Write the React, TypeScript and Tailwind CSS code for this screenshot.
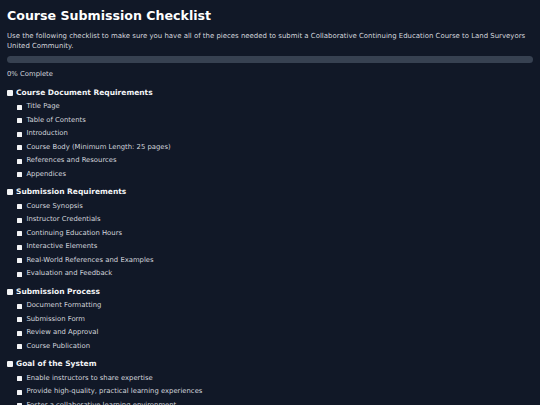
const sections: { title: string; items: string[] }[] = [
  {
    title: 'Course Document Requirements',
    items: [
      'Title Page',
      'Table of Contents',
      'Introduction',
      'Course Body (Minimum Length: 25 pages)',
      'References and Resources',
      'Appendices',
    ],
  },
  {
    title: 'Submission Requirements',
    items: [
      'Course Synopsis',
      'Instructor Credentials',
      'Continuing Education Hours',
      'Interactive Elements',
      'Real-World References and Examples',
      'Evaluation and Feedback',
    ],
  },
  {
    title: 'Submission Process',
    items: ['Document Formatting', 'Submission Form', 'Review and Approval', 'Course Publication'],
  },
  {
    title: 'Goal of the System',
    items: [
      'Enable instructors to share expertise',
      'Provide high-quality, practical learning experiences',
      'Foster a collaborative learning environment',
    ],
  },
];

export default function App() {
  return (
    <div
      className="min-h-screen bg-[#111827] px-[7px] pt-[7.5px] pb-4 text-gray-300"
      style={{ fontFamily: '"DejaVu Sans", Verdana, sans-serif' }}
    >
      <h1 className="text-[12.6px] leading-[15px] font-bold text-white">Course Submission Checklist</h1>
      <p className="mt-[8px] text-[6.95px] leading-[10px] text-gray-300">
        Use the following checklist to make sure you have all of the pieces needed to submit a Collaborative
        Continuing Education Course to Land Surveyors United Community.
      </p>

      {/* progress */}
      <div className="mt-[5.6px] h-[6.5px] w-full rounded-full bg-[#374151]">
        <div className="h-full rounded-full bg-blue-500" style={{ width: '0%' }} />
      </div>
      <p className="mt-[6.7px] text-[6.85px] leading-[10px]">0% Complete</p>

      <div className="mt-[8.5px] flex flex-col gap-[6px]">
        {sections.map((s) => (
          <div key={s.title}>
            <div className="flex h-[10px] items-center gap-[3px]">
              <span className="h-[6px] w-[6px] shrink-0 rounded-[1px] bg-gray-100" />
              <h2 className="text-[7.5px] leading-[10px] font-bold text-gray-100">{s.title}</h2>
            </div>
            <ul className="mt-[2.5px] pl-[10.4px]">
              {s.items.map((item) => (
                <li key={item} className="flex h-[13.5px] items-center gap-[4px]">
                  <span className="h-[5px] w-[5px] shrink-0 rounded-[0.5px] bg-gray-100" />
                  <span className="text-[6.85px] leading-[13.5px]">{item}</span>
                </li>
              ))}
            </ul>
          </div>
        ))}
      </div>
    </div>
  );
}
